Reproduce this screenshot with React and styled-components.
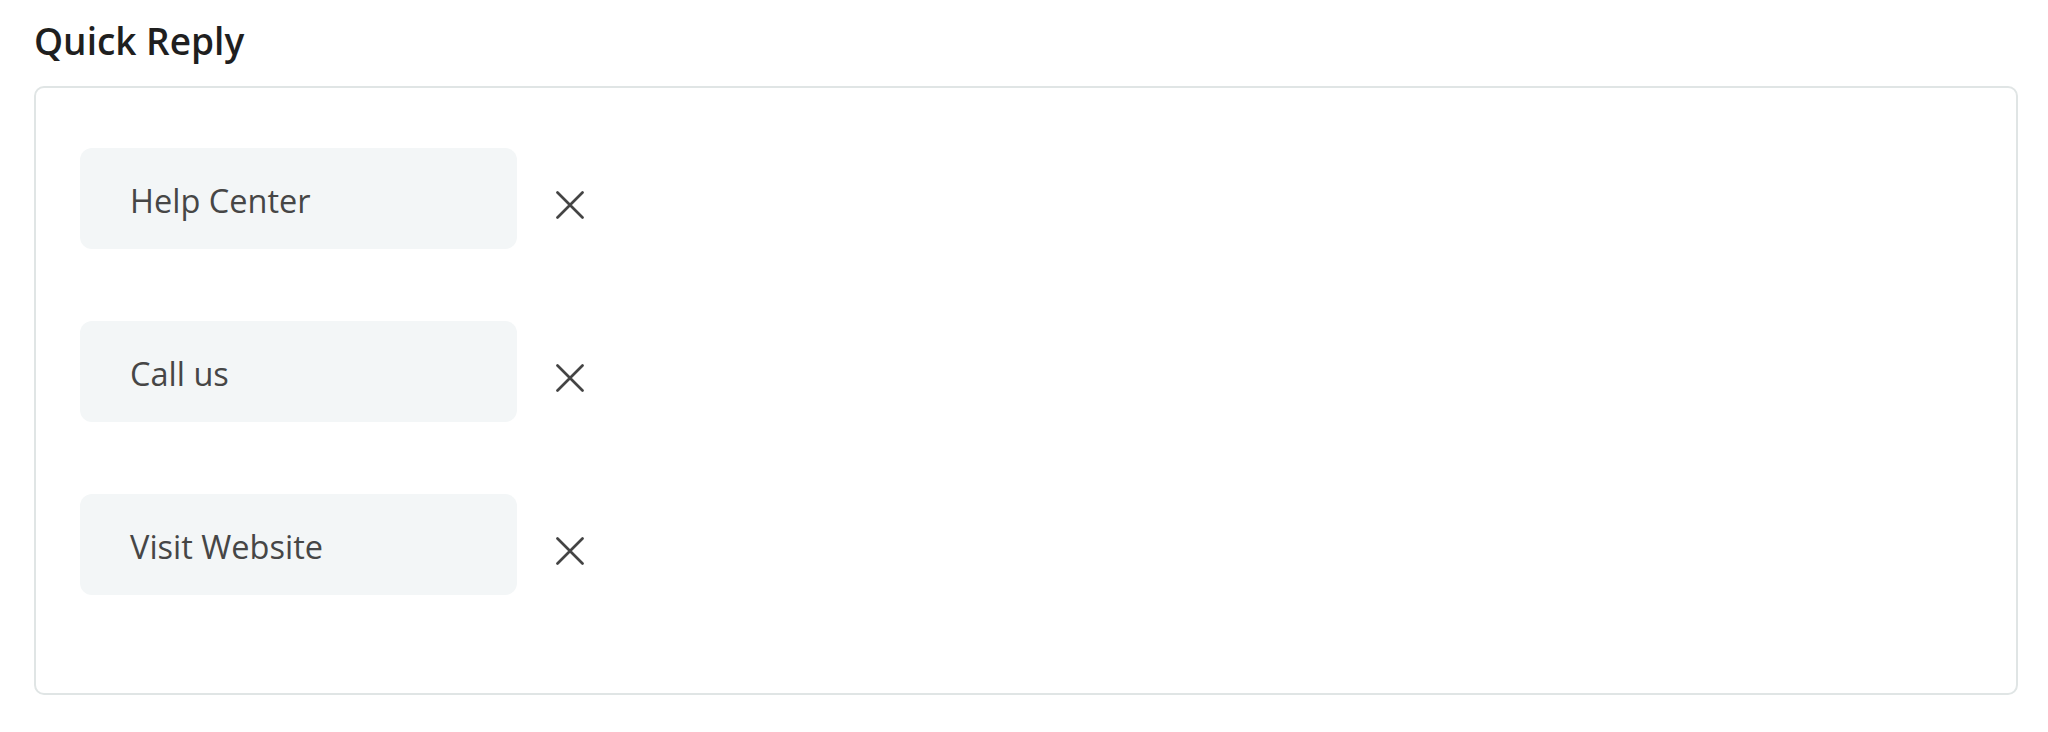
import React from "react"
import styled, { createGlobalStyle } from "styled-components"

const GlobalStyle = createGlobalStyle`
  body {
    margin: 0;
    background: #ffffff;
    font-family: "Open Sans", "Noto Sans", sans-serif;
  }
`

const Page = styled.div`
  padding: 19px 30px 0 34px;
`

const Title = styled.h2`
  margin: 0 0 23px;
  font-size: 37px;
  line-height: 44px;
  font-weight: 600;
  color: #1f1f1f;
`

const Panel = styled.div`
  border: 2px solid #e0e5e5;
  border-radius: 10px;
  padding: 60px 44px 98px;
  display: flex;
  flex-direction: column;
  gap: 72px;
`

const Row = styled.div`
  display: flex;
  align-items: center;
  gap: 39px;
`

const Chip = styled.div`
  box-sizing: border-box;
  width: 437px;
  height: 101px;
  padding: 4px 0 0 50px;
  border-radius: 12px;
  background: #f3f6f7;
  color: #464646;
  font-size: 32.5px;
  line-height: 97px;
  white-space: nowrap;
`

const RemoveButton = styled.button`
  display: flex;
  padding: 0;
  margin-top: 13px;
  border: 0;
  background: none;
  cursor: pointer;
  color: #444444;
`

const CloseIcon = () => (
  <svg width="28" height="28" viewBox="0 0 28 28" fill="none">
    <path
      d="M1.5 1.5 L26.5 26.5 M26.5 1.5 L1.5 26.5"
      stroke="currentColor"
      strokeWidth="2.7"
      strokeLinecap="round"
    />
  </svg>
)

const replies = ["Help Center", "Call us", "Visit Website"]

export default function App() {
  return (
    <Page>
      <GlobalStyle />
      <Title>Quick Reply</Title>
      <Panel>
        {replies.map((label) => (
          <Row key={label}>
            <Chip>{label}</Chip>
            <RemoveButton aria-label={`Remove ${label}`}>
              <CloseIcon />
            </RemoveButton>
          </Row>
        ))}
      </Panel>
    </Page>
  )
}
